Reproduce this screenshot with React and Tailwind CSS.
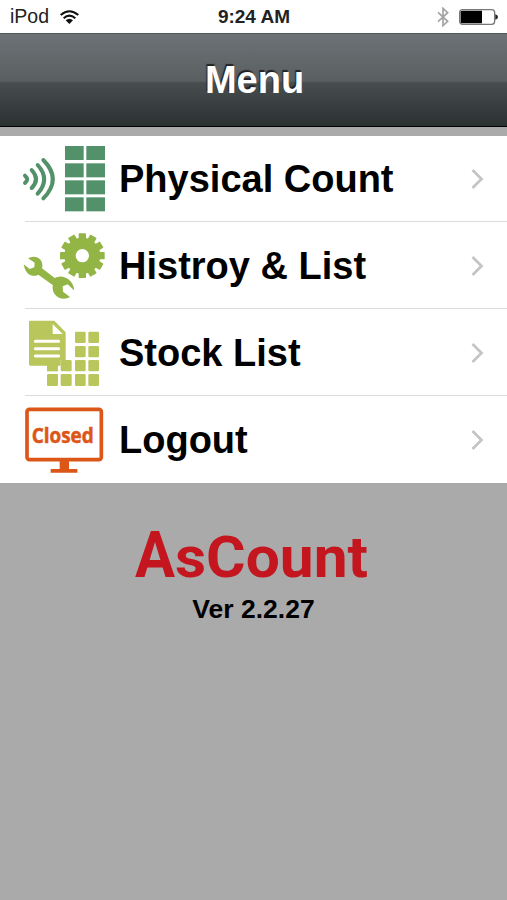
import { ChevronRight } from 'lucide-react'

const TEETH = [0, 30, 60, 90, 120, 150, 180, 210, 240, 270, 300, 330]

function CountIcon() {
  return (
    <svg viewBox="0 0 360 258" className="w-[120px] h-[86px] shrink-0" aria-hidden="true">
      <g fill="none" stroke="#529169" strokeWidth="12" strokeLinecap="round">
        <path d="M75 119 Q88 130 75 141" />
        <path d="M95 102 Q121 130 95 156" />
        <path d="M113 87 Q152 130 113 173" />
        <path d="M130 72 Q187 130 130 187" />
      </g>
      <g fill="#529169">
        {[30, 82, 133, 184].map((y) => (
          <g key={y}>
            <rect x="195" y={y} width="56" height="42" />
            <rect x="259" y={y} width="56" height="42" />
          </g>
        ))}
      </g>
    </svg>
  )
}

function SettingsIcon() {
  return (
    <svg viewBox="0 -6 360 261" className="w-[120px] h-[87px] shrink-0" aria-hidden="true">
      <circle cx="247" cy="95" r="37" fill="none" stroke="#92b545" strokeWidth="34" />
      <g fill="#92b545">
        {TEETH.map((deg) => (
          <rect key={deg} x="236" y="28" width="22" height="22" rx="2" transform={`rotate(${deg} 247 95)`} />
        ))}
        {/* Wrench */}
        <path d="M84 103 Q98 95 111 100 Q125 106 127 121 Q128 128 126 133 L164 162 Q174 156 188 158 Q211 163 219 184 Q223 192 222 199 L203 181 L188 187 L189 203 L210 219 Q194 228 177 221 Q160 212 158 194 Q157 188 159 184 L115 152 Q105 158 92 154 Q75 147 71 121 L89 135 L103 130 L104 116 Z" />
      </g>
    </svg>
  )
}

function StockIcon() {
  return (
    <svg viewBox="0 -6 360 261" className="w-[120px] h-[87px] shrink-0" aria-hidden="true">
      <g fill="#b8c65b">
        <rect x="225" y="62" width="32" height="34" rx="4" />
        <rect x="265" y="62" width="32" height="34" rx="4" />
        <rect x="225" y="105" width="32" height="34" rx="4" />
        <rect x="265" y="105" width="32" height="34" rx="4" />
        <rect x="182" y="147" width="33" height="34" rx="4" />
        <rect x="225" y="147" width="32" height="34" rx="4" />
        <rect x="265" y="147" width="32" height="34" rx="4" />
        <rect x="141" y="160" width="33" height="21" />
        <rect x="141" y="189" width="33" height="36" rx="4" />
        <rect x="182" y="189" width="33" height="36" rx="4" />
        <rect x="225" y="189" width="32" height="36" rx="4" />
        <rect x="265" y="189" width="32" height="36" rx="4" />
        <path d="M91 29 H163 L197 64 V148 H182 V164 H91 Q87 164 87 160 V33 Q87 29 91 29 Z" />
      </g>
      <path d="M158 39 V69 H188 Z" fill="white" />
      <path d="M106 91 H176 M106 113 H176 M106 135 H176" stroke="white" strokeWidth="9" strokeLinecap="round" />
    </svg>
  )
}

function ClosedIcon() {
  return (
    <svg viewBox="0 -6 360 261" className="w-[120px] h-[87px] shrink-0" aria-hidden="true">
      <rect x="81" y="34" width="223" height="151" rx="7" fill="none" stroke="#dc5618" strokeWidth="11" />
      <path d="M179 188 H207 V213 H232 V224 H152 V213 H179 Z" fill="#dc5618" />
      <text
        x="95"
        y="136"
        textLength="186"
        lengthAdjust="spacingAndGlyphs"
        fill="#dc5618"
        stroke="#dc5618"
        strokeWidth="1.5"
        className="font-['Open_Sans',sans-serif] text-[62px] font-bold"
      >
        Closed
      </text>
    </svg>
  )
}

const menuItems = [
  { label: 'Physical Count', Icon: CountIcon, height: 'h-[86px]' },
  { label: 'Histroy & List', Icon: SettingsIcon, height: 'h-[87px]' },
  { label: 'Stock List', Icon: StockIcon, height: 'h-[87px]' },
  { label: 'Logout', Icon: ClosedIcon, height: 'h-[87px]' },
]

function StatusBar() {
  return (
    <div className="grid grid-cols-3 items-center h-[33px] bg-white pl-[10px] pr-[9px] text-[19px] text-[#222]">
      <div className="flex items-center gap-[11px]">
        <span className="pt-px text-[19.5px]">iPod</span>
        <svg viewBox="0 0 57 42" className="w-[19px] h-[14px]" aria-label="Wi-Fi">
          <g fill="none" stroke="#111" strokeWidth="6">
            <path d="M2 15 Q28 -8 55 15" />
            <path d="M11 25 Q28 9 46 25" />
          </g>
          <path d="M17 31 Q28 21 39 31 L28 42 Z" fill="#111" />
        </svg>
      </div>
      <span className="pt-[2px] text-center font-bold whitespace-nowrap">9:24 AM</span>
      <div className="flex items-center justify-end gap-[10px]">
        <svg viewBox="0 0 36 60" className="w-[12px] h-[20px]" aria-label="Bluetooth">
          <path d="M3 16 L32 43 L18 56 V4 L32 17 L3 44" fill="none" stroke="#a3a3a3" strokeWidth="5" />
        </svg>
        <svg viewBox="0 0 117 48" className="w-[39px] h-[16px]" aria-label="Battery">
          <rect x="2" y="2" width="105" height="44" rx="9" fill="white" stroke="#777" strokeWidth="4" />
          <path d="M10 5 H69 V43 H10 Q5 43 5 38 V10 Q5 5 10 5 Z" fill="black" />
          <path d="M109 16 Q117 18 117 24 Q117 30 109 32 Z" fill="#222" />
        </svg>
      </div>
    </div>
  )
}

function Logo() {
  return (
    <svg viewBox="0 0 240 52" className="w-[240px] h-[52px] overflow-visible" role="img" aria-label="AsCount">
      <g fill="#c4161f" className="font-[Roboto,sans-serif] text-[58px] font-bold">
        <text x="1" y="49" textLength="40" lengthAdjust="spacingAndGlyphs" className="text-[65px]">A</text>
        <text x="41" y="49" textLength="193" lengthAdjust="spacingAndGlyphs">sCount</text>
      </g>
    </svg>
  )
}

export default function App() {
  return (
    <div className="flex flex-col w-full min-h-screen bg-[#aaaaaa] font-['Liberation_Sans',Arial,sans-serif]">
      <StatusBar />

      <header className="flex items-center justify-center h-[94px] border-t border-b border-t-[#50585b] border-b-black bg-[linear-gradient(to_bottom,#6d7277_0%,#5a5f61_51%,#484e50_53%,#2b3031_100%)]">
        <h1 className="pl-[2px] text-[38px] leading-none font-bold text-white [text-shadow:-1px_-2px_1px_#222]">Menu</h1>
      </header>

      <nav className="mt-[9px] bg-white">
        {menuItems.map(({ label, Icon, height }, i) => (
          <a key={label} href="#" className={`flex flex-col ${height}`}>
            <div className="flex flex-1 min-h-0 items-center">
              <Icon />
              <span className="flex-1 pt-px -ml-px text-[38px] leading-none font-bold text-black whitespace-nowrap">
                {label}
              </span>
              <ChevronRight className="w-[36px] h-[36px] mt-px mr-[12px] text-[#c4c4c6]" strokeWidth={1.8} strokeLinecap="butt" strokeLinejoin="miter" />
            </div>
            {i < menuItems.length - 1 && <div className="h-px ml-[25px] shrink-0 bg-[#dcdcdc]" />}
          </a>
        ))}
      </nav>

      <footer className="flex flex-col items-center mt-[45px]">
        <Logo />
        <p className="mt-[16px] text-[26.5px] leading-none font-bold text-black">Ver 2.2.27</p>
      </footer>
    </div>
  )
}
